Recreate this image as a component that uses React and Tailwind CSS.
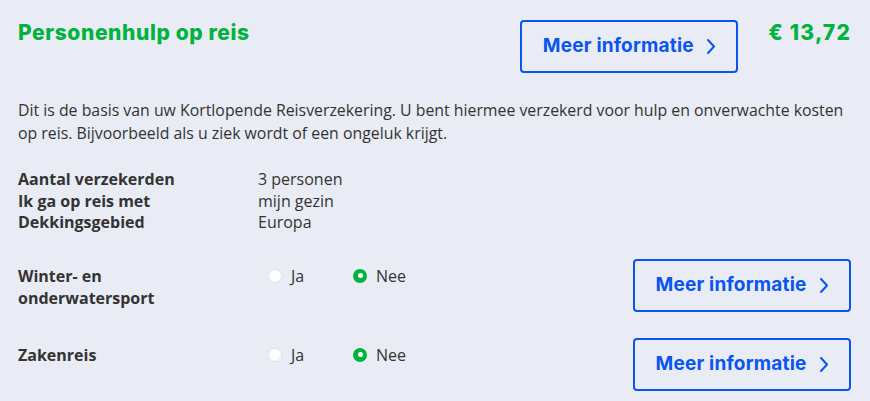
import React from "react";

const ChevronRight = () => (
  <svg className="w-[10px] h-[17px]" viewBox="0 0 10 17" fill="none" stroke="currentColor">
    <path d="M2 2l6 6.5-6 6.5" strokeWidth={2} strokeLinecap="round" strokeLinejoin="round" />
  </svg>
);

const InfoButton = ({ className = "" }) => (
  <button
    className={`flex items-center justify-center gap-[12px] w-[218px] h-[53px] border-2 border-[#0a55f0] rounded-[4px] text-[#0a55f0] text-[19px] font-bold tracking-[0.2px] ${className}`}
    style={{ fontFamily: "Inter, 'Liberation Sans', sans-serif" }}
  >
    <span>Meer informatie</span>
    <ChevronRight />
  </button>
);

const Radio = ({ checked, label }) => (
  <div className="flex items-center gap-[9px] w-[85px]">
    {checked ? (
      <span className="w-[14px] h-[14px] rounded-full bg-[#00b33c] flex items-center justify-center">
        <span className="w-[5px] h-[5px] rounded-full bg-white"></span>
      </span>
    ) : (
      <span className="w-[14px] h-[14px] rounded-full bg-white border border-[#dfe2ea]"></span>
    )}
    <span>{label}</span>
  </div>
);

const OptionRow = ({ label }) => (
  <div className="flex items-start">
    <div className="w-[250px] pt-[6px] font-bold leading-[22px]">{label}</div>
    <div className="flex pt-[6px] leading-[22px]">
      <Radio label="Ja" />
      <Radio checked label="Nee" />
    </div>
    <InfoButton className="ml-auto" />
  </div>
);

export default function App() {
  return (
    <div
      className="w-[870px] h-[401px] bg-[#e9ecf4] text-[#333] text-[16px] pl-[18px] pr-[19px] pt-[20px] overflow-hidden"
      style={{ fontFamily: "'Open Sans', 'Liberation Sans', sans-serif" }}
    >
      <div className="flex items-start">
        <h1
          className="flex-1 text-[21px] font-extrabold text-[#00b33c] leading-[26px] tracking-[0.6px]"
          style={{ fontFamily: "Inter, 'Liberation Sans', sans-serif" }}
        >
          Personenhulp op reis
        </h1>
        <InfoButton />
        <div
          className="ml-[30px] text-[21px] font-extrabold text-[#00b33c] leading-[26px] tracking-[1.2px]"
          style={{ fontFamily: "Inter, 'Liberation Sans', sans-serif" }}
        >
          € 13,72
        </div>
      </div>

      <p className="mt-[26px] text-[15.85px] leading-[23px]">
        Dit is de basis van uw Kortlopende Reisverzekering. U bent hiermee verzekerd voor hulp en onverwachte kosten op reis. Bijvoorbeeld als u ziek wordt of een ongeluk krijgt.
      </p>

      <div className="mt-[24px] grid grid-cols-[240px_1fr] leading-[21.5px]">
        <div className="font-bold">Aantal verzekerden</div>
        <div>3 personen</div>
        <div className="font-bold">Ik ga op reis met</div>
        <div>mijn gezin</div>
        <div className="font-bold">Dekkingsgebied</div>
        <div>Europa</div>
      </div>

      <div className="mt-[25px] flex flex-col gap-[26px]">
        <OptionRow label={<>Winter- en<br />onderwatersport</>} />
        <OptionRow label="Zakenreis" />
      </div>
    </div>
  );
}
